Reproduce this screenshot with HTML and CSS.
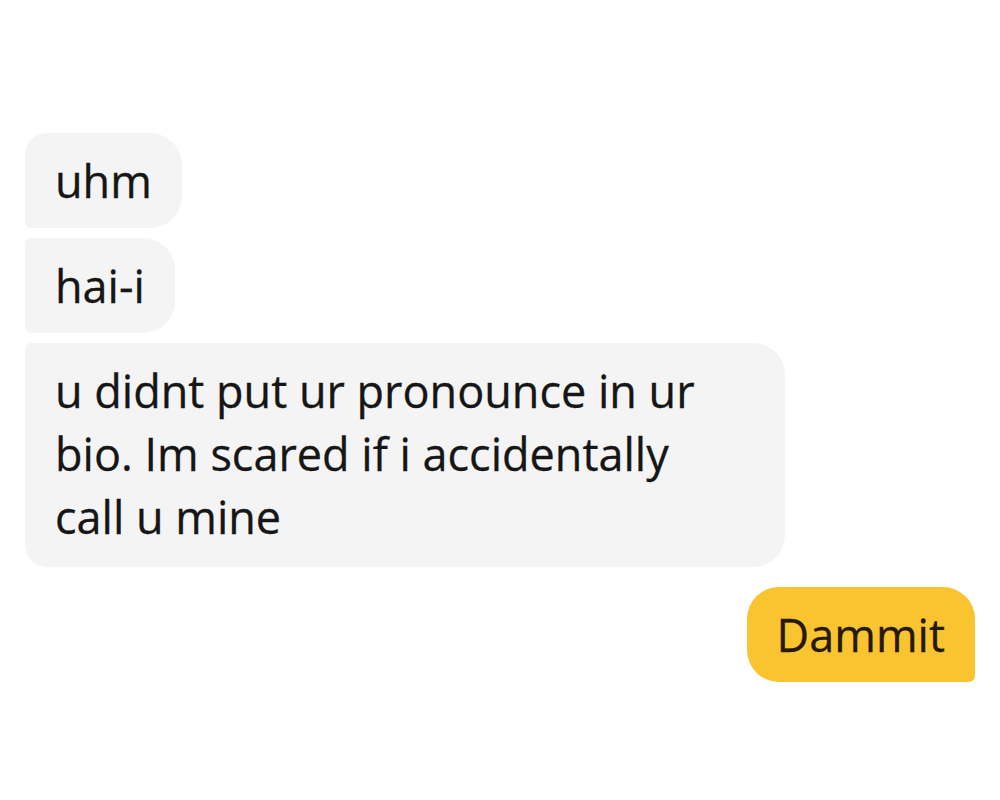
FILE: index.html
```html
<!DOCTYPE html>
<html lang="en">
<head>
<meta charset="utf-8">
<title>Chat</title>
<link rel="stylesheet" href="styles.css">
</head>
<body>
<main class="chat">
  <div class="bubble in first">uhm</div>
  <div class="bubble in middle">hai-i</div>
  <div class="bubble in last wide">u didnt put ur pronounce in ur bio. Im scared if i accidentally call u mine</div>
  <div class="bubble out">Dammit</div>
</main>
</body>
</html>
```
FILE: styles.css
```css
html, body {
  margin: 0;
  padding: 0;
  background: #ffffff;
}

body {
  width: 1000px;
  height: 800px;
  overflow: hidden;
  font-family: "Open Sans", "Noto Sans", sans-serif;
}

.chat {
  display: flex;
  flex-direction: column;
  align-items: flex-start;
  gap: 10px;
  padding: 133px 25px 0 25px;
}

.bubble {
  box-sizing: border-box;
  font-size: 45px;
  line-height: 63px;
  padding: 16px 30px;
  color: #161616;
  -webkit-text-stroke: 0.3px currentColor;
}

.in {
  background: #f4f4f4;
  border-radius: 6px 32px 32px 6px;
}

.in.first {
  border-top-left-radius: 22px;
}

.in.last {
  border-bottom-left-radius: 22px;
  padding-bottom: 19px;
}

.wide {
  width: 760px;
  padding-right: 60px;
}

.out {
  align-self: flex-end;
  margin-top: 10px;
  background: #f9c42f;
  color: #24190a;
  border-radius: 32px 32px 6px 32px;
}
```
